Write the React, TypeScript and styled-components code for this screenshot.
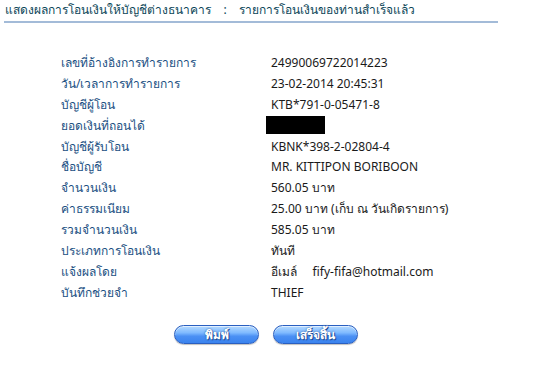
import React from "react";
import styled, { createGlobalStyle } from "styled-components";

const Global = createGlobalStyle`
  html, body { margin: 0; padding: 0; background: #ffffff; }
  body { font-family: Tahoma, "Noto Sans", "DejaVu Sans", sans-serif; }
`;

const Page = styled.div`
  width: 555px;
  height: 366px;
  display: flex;
  flex-direction: column;
  padding: 2px 0 0 4px;
  box-sizing: border-box;
`;

const Title = styled.div`
  font-size: 12px;
  line-height: 15px;
  color: #0c4658;
  padding-left: 1px;
  white-space: pre;
`;

const Rule = styled.div`
  width: 494px;
  height: 2px;
  margin-top: 4px;
  background: #a3bbd8;
`;

const Table = styled.div`
  display: grid;
  grid-template-columns: 210px 1fr;
  grid-auto-rows: 20.9px;
  align-items: center;
  margin: 29px 0 0 57px;
  font-size: 12px;
`;

const Label = styled.div`
  color: #1a4f82;
`;

const Value = styled.div`
  color: #1a1a1a;
  white-space: pre;
`;

const Masked = styled.div`
  width: 59px;
  height: 18px;
  margin-left: -5px;
  background: #000000;
`;

const Buttons = styled.div`
  display: flex;
  gap: 14px;
  margin: 22px 0 0 170px;
`;

const PillButton = styled.button`
  width: 85px;
  height: 19px;
  padding: 0;
  border-radius: 10px;
  border: 1px solid #2a5fc0;
  background: linear-gradient(to bottom, #b5daff 0%, #7fbaff 40%, #4b90f4 60%, #3a83ee 100%);
  box-shadow: inset 0 1px 0 rgba(255,255,255,0.6), 0 1px 1px rgba(0,0,0,0.25);
  color: #ffffff;
  font-family: Tahoma, "Noto Sans", sans-serif;
  font-size: 12px;
  font-weight: bold;
  line-height: 17px;
  text-shadow: 0 0 2px #1d4a94, 1px 1px 0 #1d4a94;
  cursor: pointer;
`;

const rows: [string, React.ReactNode][] = [
  ["เลขที่อ้างอิงการทำรายการ", "24990069722014223"],
  ["วัน/เวลาการทำรายการ", "23-02-2014 20:45:31"],
  ["บัญชีผู้โอน", "KTB*791-0-05471-8"],
  ["ยอดเงินที่ถอนได้", null],
  ["บัญชีผู้รับโอน", "KBNK*398-2-02804-4"],
  ["ชื่อบัญชี", "MR. KITTIPON BORIBOON"],
  ["จำนวนเงิน", "560.05 บาท"],
  ["ค่าธรรมเนียม", "25.00 บาท (เก็บ ณ วันเกิดรายการ)"],
  ["รวมจำนวนเงิน", "585.05 บาท"],
  ["ประเภทการโอนเงิน", "ทันที"],
  ["แจ้งผลโดย", "อีเมล์     fify-fifa@hotmail.com"],
  ["บันทึกช่วยจำ", "THIEF"],
];

export default function App() {
  return (
    <>
      <Global />
      <Page>
        <Title>{"แสดงผลการโอนเงินให้บัญชีต่างธนาคาร    :    รายการโอนเงินของท่านสำเร็จแล้ว"}</Title>
        <Rule />
        <Table>
          {rows.map(([label, value]) => (
            <React.Fragment key={label}>
              <Label>{label}</Label>
              {value === null ? <Masked /> : <Value>{value}</Value>}
            </React.Fragment>
          ))}
        </Table>
        <Buttons>
          <PillButton>พิมพ์</PillButton>
          <PillButton>เสร็จสิ้น</PillButton>
        </Buttons>
      </Page>
    </>
  );
}
